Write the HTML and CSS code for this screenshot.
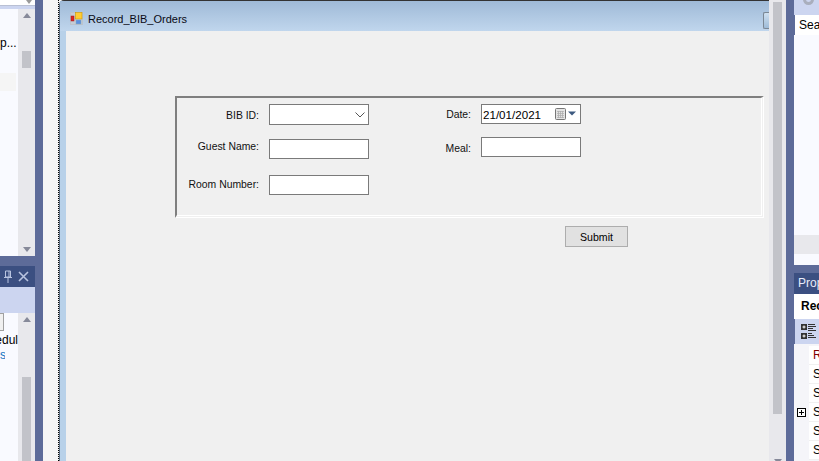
FILE: index.html
```html
<!DOCTYPE html>
<html lang="en">
<head>
<meta charset="utf-8">
<title>Record_BIB_Orders</title>
<link rel="stylesheet" href="styles.css">
</head>
<body>
<div class="ide">
  <aside class="left">
    <div class="l-top">
      <div class="l-head"><div class="l-search"><span class="l-glyph"></span></div></div>
      <div class="l-body">
        <div class="l-list">
          <div class="l-item">p...</div>
          <div class="l-sel"></div>
        </div>
        <div class="sb sb-a"><span class="up"></span><span class="thumb t1"></span><span class="grow"></span><span class="down"></span></div>
      </div>
    </div>
    <div class="l-bottom">
      <div class="dock-title">
        <svg class="pin" width="10" height="13" viewBox="0 0 10 13"><path d="M2.500 1h5v6h-5zM6 1v6M1 7.500h8M5 8v5" fill="none" stroke="#b9c4e0" stroke-width="1"/></svg>
        <svg class="close" width="11" height="11" viewBox="0 0 11 11"><path d="M1 1l9 9M10 1l-9 9" stroke="#b9c4e0" stroke-width="1.600"/></svg>
      </div>
      <div class="l-tool"></div>
      <div class="l-body">
        <div class="l-list">
          <div class="l-input"></div>
          <div class="l-text">edul</div>
          <div class="l-link">s</div>
        </div>
        <div class="sb sb-b"><span class="up"></span><span class="thumb t2"></span></div>
      </div>
    </div>
  </aside>

  <main class="designer">
    <div class="canvas">
      <div class="selection">
        <div class="form">
          <div class="titlebar">
            <svg class="form-icon" width="13" height="13" viewBox="0 0 13 13">
              <rect x="0.500" y="0.500" width="12" height="12" fill="#c4ccd6" stroke="#bcc3cc"/>
              <rect x="1" y="4" width="3" height="5" fill="#d22" stroke="#922" stroke-width="0.500"/>
              <rect x="5.500" y="0.500" width="6.500" height="6.500" fill="#fc3" stroke="#c90" stroke-width="0.600"/>
              <rect x="6" y="8" width="5" height="4" fill="#5a8fe0" stroke="#8ab" stroke-width="0.500"/>
            </svg>
            <span class="title-text">Record_BIB_Orders</span>
            <span class="ctl"></span>
          </div>
          <div class="client">
            <div class="group">
              <div class="col col-a">
                <div class="row r1"><label class="lbl dn2">BIB ID:</label><div class="box combo"><svg width="10" height="6" viewBox="0 0 10 6"><path d="M0.500 0.500L5 5l4.500-4.500" fill="none" stroke="#555" stroke-width="1"/></svg></div></div>
                <div class="row r2"><label class="lbl up4">Guest Name:</label><div class="box"></div></div>
                <div class="row r3"><label class="lbl up2">Room Number:</label><div class="box"></div></div>
              </div>
              <div class="col col-b">
                <div class="row r1"><label class="lbl">Date:</label><div class="box date"><span>21/01/2021</span>
                  <svg class="cal" width="24" height="12" viewBox="0 0 24 12"><rect x="0.500" y="0.500" width="10" height="11" rx="1" fill="#e4e4e4" stroke="#777"/><path d="M2 3.500h7M2 5.500h7M2 7.500h7M2 9.500h7M3.500 3v7M5.500 3v7M7.500 3v7" stroke="#aaa" stroke-width="0.700"/><path d="M13 3.500h8l-4 4z" fill="#3d5a80"/></svg></div></div>
                <div class="row r2b"><label class="lbl dn3">Meal:</label><div class="box"></div></div>
              </div>
            </div>
            <button class="submit" type="button">Submit</button>
          </div>
        </div>
      </div>
    </div>
    <div class="sb sb-main"><span class="thumb t3"></span><span class="grow"></span><span class="down"></span></div>
  </main>

  <aside class="right">
    <div class="r-head"><div class="r-circle"></div></div>
    <div class="r-search">Sear</div>
    <div class="r-body"></div>
    <div class="r-band"></div>
    <div class="r-foot"></div>
    <div class="r-gap"></div>
    <div class="dock-title prop-title">Prop</div>
    <div class="prop-name">Rec</div>
    <div class="prop-tool">
      <svg width="15" height="15" viewBox="0 0 15 15"><rect x="0" y="0" width="6" height="6" fill="#333"/><rect x="0" y="9" width="6" height="6" fill="#333"/><path d="M1.500 3h3M3 1.500v3M1.500 12h3M3 10.500v3" stroke="#fff"/><path d="M7 .5h7M7 2.500h8M7 4.500h5M7 6.500h8M7 9.500h4M7 11.500h6M7 13.500h8" stroke="#333" stroke-width="1"/></svg>
    </div>
    <div class="prop-grid">
      <div class="prop-row"><span class="gut"></span><span class="cell red">R</span></div>
      <div class="prop-row"><span class="gut"></span><span class="cell">S</span></div>
      <div class="prop-row"><span class="gut"></span><span class="cell">S</span></div>
      <div class="prop-row"><span class="gut"><svg width="9" height="9" viewBox="0 0 9 9"><rect x="0.500" y="0.500" width="8" height="8" fill="#fff" stroke="#000"/><path d="M2 4.500h5M4.500 2v5" stroke="#000"/></svg></span><span class="cell">S</span></div>
      <div class="prop-row"><span class="gut"></span><span class="cell">S</span></div>
      <div class="prop-row"><span class="gut"></span><span class="cell">S</span></div>
    </div>
  </aside>
</div>
</body>
</html>
```
FILE: styles.css
```css
* { box-sizing: border-box; }
html, body { margin: 0; height: 100%; overflow: hidden; }
body { font-family: "Liberation Sans", Arial, sans-serif; font-size: 10.4px; color: #000; background: #5d6b99; }

.ide { display: grid; grid-template-columns: 35px 743px 25px; column-gap: 8px; width: 819px; height: 461px; background: #5d6b99; overflow: hidden; }

/* left dock */
.left { display: flex; flex-direction: column; min-width: 0; }
.l-top { height: 256px; display: flex; flex-direction: column; background: #f9faff; }
.l-head { height: 9px; background: #ccd5f0; flex: none; }
.l-search { height: 6px; background: #fff; border-bottom: 1px solid #b9c0d4; position: relative; }
.l-glyph { position: absolute; left: 26px; top: 0; border: 3px solid transparent; border-top: 4px solid #999; }
.l-body { flex: 1; display: flex; min-height: 0; background: #f9faff; }
.l-list { width: 18px; overflow: hidden; }
.l-item { margin-top: 27px; font-size: 12px; line-height: 14px; white-space: nowrap; }
.l-sel { margin-top: 23px; width: 16px; height: 18px; background: #f5f5f5; }
.l-bottom { flex: 1; margin-top: 10px; display: flex; flex-direction: column; min-height: 0; }
.dock-title { height: 21px; flex: none; background: #3b4f81; color: #e8edfa; font-size: 12px; }
.left .dock-title { display: flex; align-items: center; justify-content: flex-end; gap: 5px; padding-right: 6px; }
.l-tool { height: 26px; flex: none; background: #ccd5f0; }
.l-input { width: 4px; height: 18px; background: #f0f0f0; border: 1px solid #a0a0a0; border-left: 0; }
.l-text { direction: rtl; font-size: 12px; line-height: 16px; width: 18px; margin-top: 1px; white-space: nowrap; }
.l-link { font-size: 12px; line-height: 15px; width: 5px; color: #0e70c0; overflow: hidden; }

/* scrollbars */
.sb { width: 17px; flex: none; background: #e8e8ec; display: flex; flex-direction: column; align-items: center; }
.up { margin-top: 4px; border: 4.500px solid transparent; border-top: 0; border-bottom: 5px solid #868999; flex: none; width: 0; height: 0; }
.down { margin-bottom: 3px; border: 4.500px solid transparent; border-bottom: 0; border-top: 5px solid #868999; flex: none; width: 0; height: 0; }
.sb-a .down { margin-bottom: 4px; }
.thumb { width: 9px; background: #c2c3c9; flex: none; }
.grow { flex: 1; }
.t1 { height: 17px; margin-top: 33px; }
.t2 { height: 90px; margin-top: 55px; }
.t3 { height: 412px; margin-top: 2px; }

/* designer */
.designer { display: flex; min-width: 0; }
.canvas { flex: 1; background: #f5f5f5; padding-left: 15px; min-width: 0; }
.selection { height: 100%; border-left: 1px dotted #000; }
.form { height: 100%; background: #b8d1e9; border-top: 1px solid #333; border-left: 1px solid #5a6a7c; border-top-left-radius: 5px; padding-left: 6px; display: flex; flex-direction: column; }
.titlebar { height: 30px; flex: none; margin-left: -6px; padding-left: 10px; display: flex; align-items: center; background: linear-gradient(#9fbad7, #c0d6ed); }
.form-icon { flex: none; margin-top: 4px; }
.title-text { margin-left: 5px; font-size: 11px; margin-top: 6px; color: #0a0a14; }
.ctl { margin-left: auto; width: 6px; height: 17px; margin-top: 9px; border: 1px solid #7b8794; border-right: 0; border-radius: 2px 0 0 2px; background: linear-gradient(#cfe0f0, #9fbcd8); }
.client { flex: 1; background: #f0f0f0; padding-top: 65px; padding-left: 109px; }

.group { width: 589px; height: 122px; border-top: 2px solid #7f7f7f; border-left: 2px solid #7f7f7f; border-right: 3px double #fff; border-bottom: 3px double #fff; display: flex; gap: 62px; }
.col { display: flex; flex-direction: column; }
.col-a { --lw: 82px; }
.col-b { --lw: 40px; }
.row { display: flex; align-items: center; gap: 10px; }
.lbl { width: var(--lw); text-align: right; white-space: nowrap; flex: none; color: #111; }
.r1 { margin-top: 6px; }
.r2 { margin-top: 14px; }
.r3 { margin-top: 16px; }
.r2b { margin-top: 13px; }
.up4 { padding-bottom: 5px; }
.up2 { padding-bottom: 2px; }
.dn2 { padding-top: 2px; }
.dn3 { padding-top: 3px; }
.box { width: 100px; height: 20px; background: #fff; border: 1px solid #7a7a7a; display: flex; align-items: center; }
.combo { height: 21px; justify-content: flex-end; padding-right: 3px; }
.date { justify-content: space-between; padding-left: 1px; padding-right: 1px; font-size: 11.600px; }
.submit { display: block; margin: 8px 0 0 390px; width: 63px; height: 21px; padding: 0; background: #e1e1e1; border: 1px solid #adadad; font: 10.600px "Liberation Sans", Arial, sans-serif; color: #000; }

/* right dock */
.right { display: flex; flex-direction: column; min-width: 0; }
.r-head { height: 15px; background: #ccd5f0; flex: none; position: relative; overflow: hidden; }
.r-circle { position: absolute; left: 9px; top: -6px; width: 11px; height: 11px; border-radius: 50%; border: 3px solid #a9aebd; }
.r-search { height: 20px; flex: none; margin-left: 1px; background: #fff; font-size: 12px; line-height: 20px; padding-left: 4px; overflow: hidden; }
.r-body { height: 200px; flex: none; background: #f9faff; }
.r-band { height: 19px; flex: none; background: #e8e8ec; }
.r-foot { height: 11px; flex: none; background: #f9faff; }
.r-gap { height: 8px; flex: none; }
.prop-title { padding-left: 4px; line-height: 21px; }
.prop-name { height: 25px; flex: none; background: #fff; font-weight: 700; font-size: 12px; line-height: 25px; padding-left: 7px; white-space: nowrap; overflow: hidden; }
.prop-tool { height: 25px; flex: none; margin-left: 1px; background: #ccd5f0; padding: 5px 0 0 6px; }
.prop-grid { flex: 1; background: #f5f5f9; padding-top: 2px; }
.prop-row { display: flex; height: 19px; }
.gut { width: 15px; flex: none; padding: 5px 0 0 3px; display: flex; align-items: flex-start; }
.cell { flex: 1; background: #fff; border-bottom: 1px solid #f0f0f0; padding-left: 4px; font-size: 12px; line-height: 18px; }
.red { color: #800000; }
```
